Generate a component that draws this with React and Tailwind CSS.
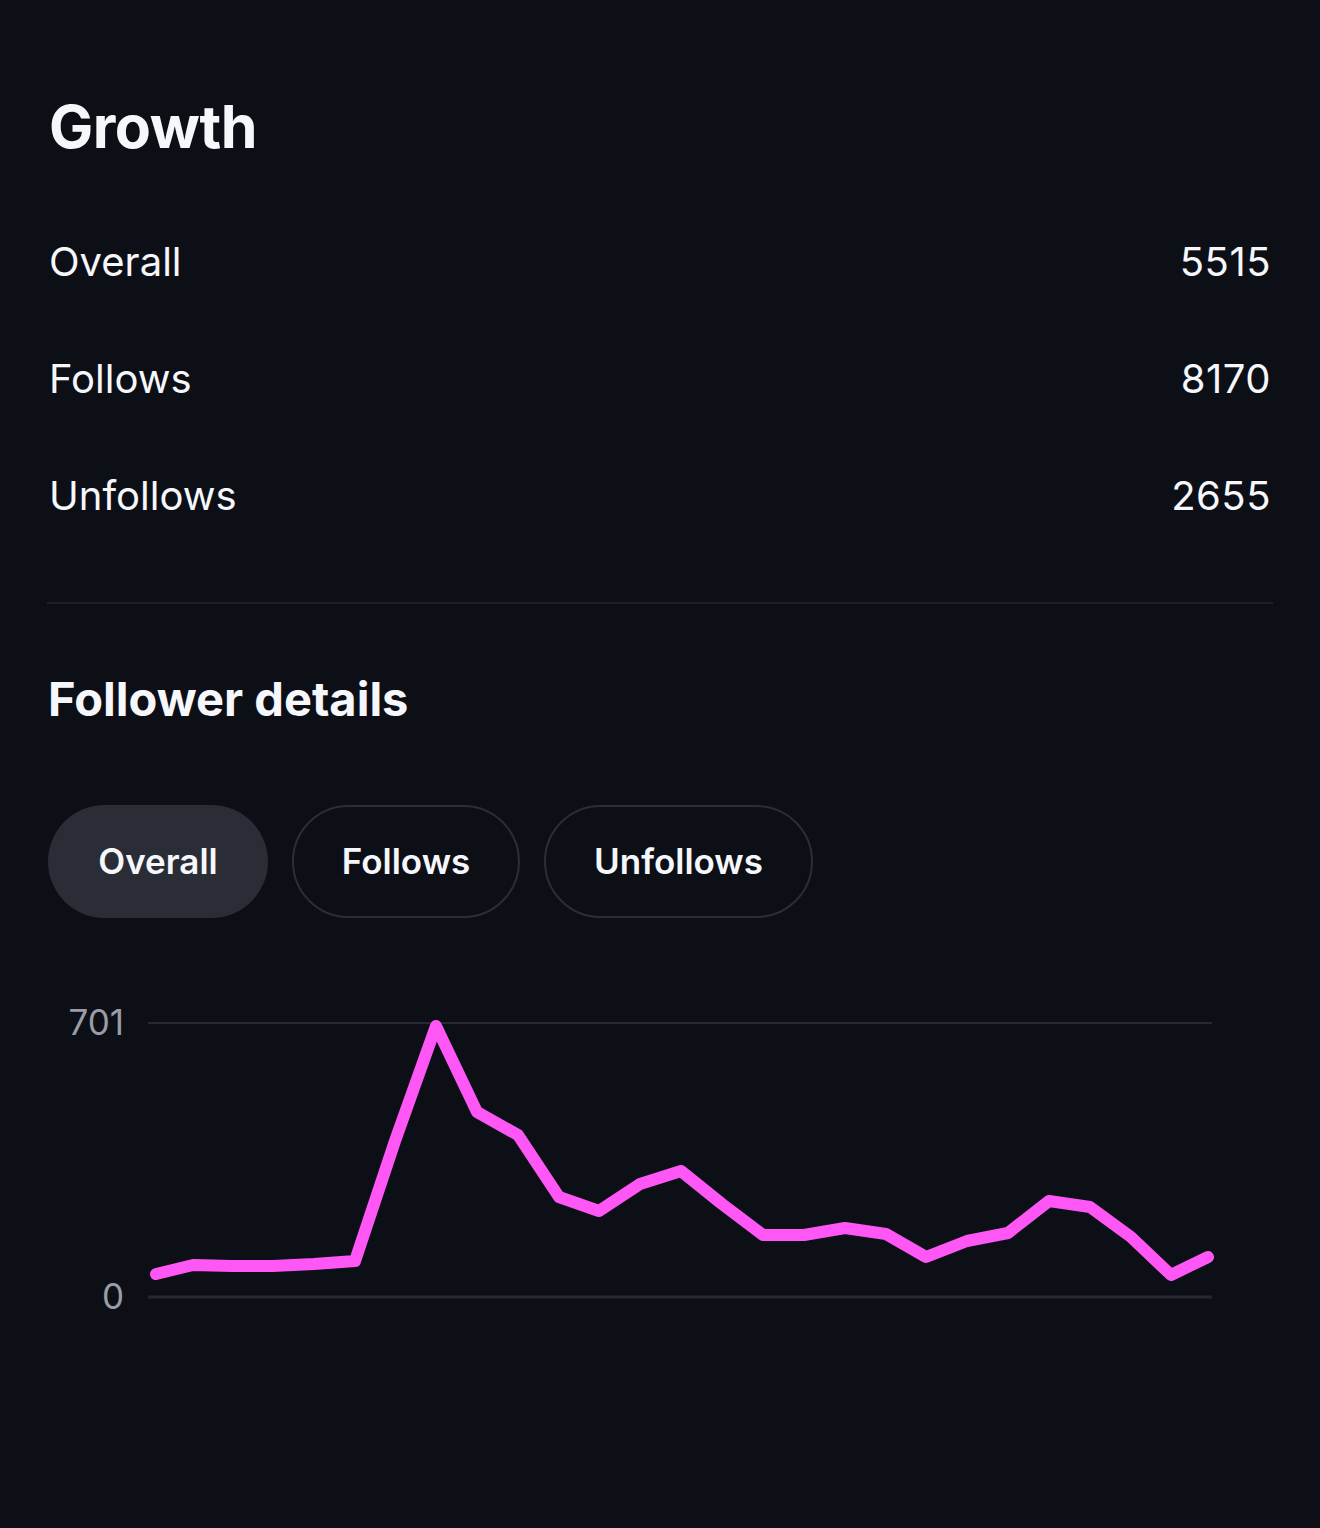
import React from "react";

const pts = [1273,1264,1265,1265,1263,1260,1140,1025,1111,1134,1196,1210,1183,1170,1203,1234,1234,1227,1233,1256,1240,1232,1200,1206,1236,1274,1256];
const xs = [156,193,232,273,314,355,395,436,477,518,559,599,640,681,722,763,804,845,886,926,967,1008,1049,1090,1131,1171,1208];

function Chart() {
  const oy = 990;
  const d = pts.map((y, i) => `${i === 0 ? "M" : "L"}${xs[i]} ${y - oy}`).join(" ");
  return (
    <svg width="1320" height="340" viewBox="0 0 1320 340" className="block">
      <line x1="148" y1="32" x2="1212" y2="32" stroke="#262833" strokeWidth="2" />
      <line x1="148" y1="306" x2="1212" y2="306" stroke="#262833" strokeWidth="3" />
      <text x="124" y="44" textAnchor="end" fill="#9a9ca6" fontSize="35" fontFamily="Inter, sans-serif">701</text>
      <text x="124" y="318" textAnchor="end" fill="#9a9ca6" fontSize="35" fontFamily="Inter, sans-serif">0</text>
      <path d={d} fill="none" stroke="#ff57f6" strokeWidth="12" strokeLinejoin="round" strokeLinecap="round" />
    </svg>
  );
}

function Row({ label, value }) {
  return (
    <div className="flex items-center justify-between h-[117px]">
      <span>{label}</span>
      <span className="tracking-[0.5px]">{value}</span>
    </div>
  );
}

export default function App() {
  return (
    <div className="w-[1320px] h-[1528px] bg-[#0d0f17] text-[#f6f7fb] overflow-hidden" style={{ fontFamily: "Inter, 'Noto Sans', sans-serif" }}>
      <div className="px-[49px] pt-[97px]">
        <h1 className="text-[59px] font-bold leading-none tracking-[-0.5px]">Growth</h1>
        <div className="mt-[47px] text-[40px] leading-none">
          <Row label="Overall" value="5515" />
          <Row label="Follows" value="8170" />
          <Row label="Unfollows" value="2655" />
        </div>
      </div>
      <div className="mx-[47px] mt-[48px] h-[2px] bg-[#1d2029]" />
      <div className="px-[48px]">
        <h2 className="mt-[71px] text-[47px] font-bold leading-none">Follower details</h2>
        <div className="mt-[83px] flex gap-[24px] text-[35px] font-semibold">
          <button className="h-[113px] w-[220px] rounded-full bg-[#2a2d36]">Overall</button>
          <button className="h-[113px] w-[228px] rounded-full border-2 border-[#2b2e37]">Follows</button>
          <button className="h-[113px] w-[269px] rounded-full border-2 border-[#2b2e37]">Unfollows</button>
        </div>
      </div>
      <div className="mt-[73px]">
        <Chart />
      </div>
    </div>
  );
}
